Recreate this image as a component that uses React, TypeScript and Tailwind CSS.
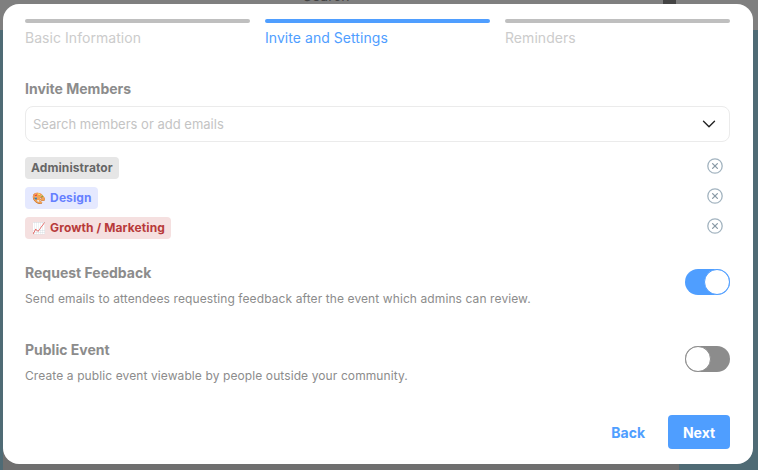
import React from 'react';
import { ChevronDown } from 'lucide-react';

const STEPS = [
  { label: 'Basic Information', active: false },
  { label: 'Invite and Settings', active: true },
  { label: 'Reminders', active: false },
];

const TAGS = [
  { label: 'Administrator', emoji: '', cls: 'bg-[#e6e6e6] text-[#666666]' },
  { label: 'Design', emoji: '🎨', cls: 'bg-[#e5e9ff] text-[#6680ff]' },
  { label: 'Growth / Marketing', emoji: '📈', cls: 'bg-[#f5e0e0] text-[#b83a3a]' },
];

const RemoveIcon = () => (
  <svg width="16" height="16" viewBox="0 0 16 16" fill="none" className="mr-[7px] mb-[4px] shrink-0">
    <circle cx="8" cy="8" r="7.2" stroke="#a3b4c0" strokeWidth="1.3" />
    <path d="M5.6 5.6l4.8 4.8M10.4 5.6l-4.8 4.8" stroke="#8a9aa6" strokeWidth="1.3" strokeLinecap="round" />
  </svg>
);

const Toggle: React.FC<{ on: boolean }> = ({ on }) => (
  <div
    className={`flex h-[26px] w-[45px] shrink-0 items-center rounded-full ${
      on ? 'justify-end bg-[#4f9eff]' : 'justify-start bg-[#8c8c8c]'
    }`}
  >
    <div className={`h-[26px] w-[26px] rounded-full border bg-white ${on ? 'border-[#4f9eff]' : 'border-[#8c8c8c]'}`} />
  </div>
);

const Setting: React.FC<{ title: string; body: string; on: boolean }> = ({ title, body, on }) => (
  <div className="flex items-start justify-between">
    <div>
      <h3 className="text-[14px] leading-[17px] font-bold text-[#8c8c8c]">{title}</h3>
      <p className="mt-[10px] text-[12px] leading-[15px] tracking-[0.1px] text-[#8c8c8c]">{body}</p>
    </div>
    <div className="mt-[5px]">
      <Toggle on={on} />
    </div>
  </div>
);

export default function App() {
  return (
    <div className="relative flex h-[470px] w-[758px] flex-col overflow-hidden bg-[#4f6b75] font-['Inter',sans-serif]">
      {/* page behind the dialog */}
      <div className="flex h-[30px] shrink-0 items-start bg-[#7f7f7f]">
        <span className="mt-[-13px] ml-[303px] text-[14px] leading-[17px] text-[#444444]">Search</span>
        <div className="ml-[314px] h-[6px] w-[13px] bg-[#444444]" />
      </div>
      <div className="ml-[3px] w-[676px] flex-1 bg-[#6f6f6f]" />

      <div className="absolute top-[4px] left-[3px] flex h-[460px] w-[750px] flex-col rounded-[16px] bg-white pr-[23px] pl-[22px]">
        <div className="mt-[15px] grid grid-cols-3 gap-[15px]">
          {STEPS.map((s) => (
            <div key={s.label}>
              <div className={`h-[4px] rounded-full ${s.active ? 'bg-[#4f9eff]' : 'bg-[#bfbfbf]'}`} />
              <p
                className={`mt-[5px] text-[14px] leading-[20px] tracking-[0.05px] ${
                  s.active ? 'text-[#4f9eff]' : 'text-[#cccccc]'
                }`}
              >
                {s.label}
              </p>
            </div>
          ))}
        </div>

        <h2 className="mt-[32px] text-[14px] leading-[17px] font-bold text-[#8c8c8c]">Invite Members</h2>
        <div className="mt-[9px] flex h-[36px] items-center justify-between rounded-[8px] border border-[#ebebeb] pr-[9px] pl-[7px]">
          <span className="mt-[1px] text-[13px] text-[#c4c4c4]">Search members or add emails</span>
          <ChevronDown size={22} strokeWidth={1.5} className="text-[#222222]" />
        </div>

        <div className="mt-[15px] flex flex-col gap-[8px]">
          {TAGS.map((t) => (
            <div key={t.label} className="flex h-[22px] items-center justify-between">
              <span
                className={`flex h-[22px] items-center gap-[4px] rounded-[4px] px-[6px] text-[12px] font-bold tracking-[0.1px] ${t.cls}`}
              >
                {t.emoji && <span className="ml-[1px] text-[11px]">{t.emoji}</span>}
                {t.label}
              </span>
              <RemoveIcon />
            </div>
          ))}
        </div>

        <div className="mt-[25px] flex flex-col gap-[35px]">
          <Setting
            title="Request Feedback"
            body="Send emails to attendees requesting feedback after the event which admins can review."
            on
          />
          <Setting
            title="Public Event"
            body="Create a public event viewable by people outside your community."
            on={false}
          />
        </div>

        <div className="mt-auto mb-[15px] flex items-center justify-end gap-[23px]">
          <button className="text-[14px] font-bold text-[#4f9eff]">Back</button>
          <button className="h-[34px] w-[62px] rounded-[4px] bg-[#4f9eff] text-[14px] font-bold text-white">
            Next
          </button>
        </div>
      </div>
    </div>
  );
}
